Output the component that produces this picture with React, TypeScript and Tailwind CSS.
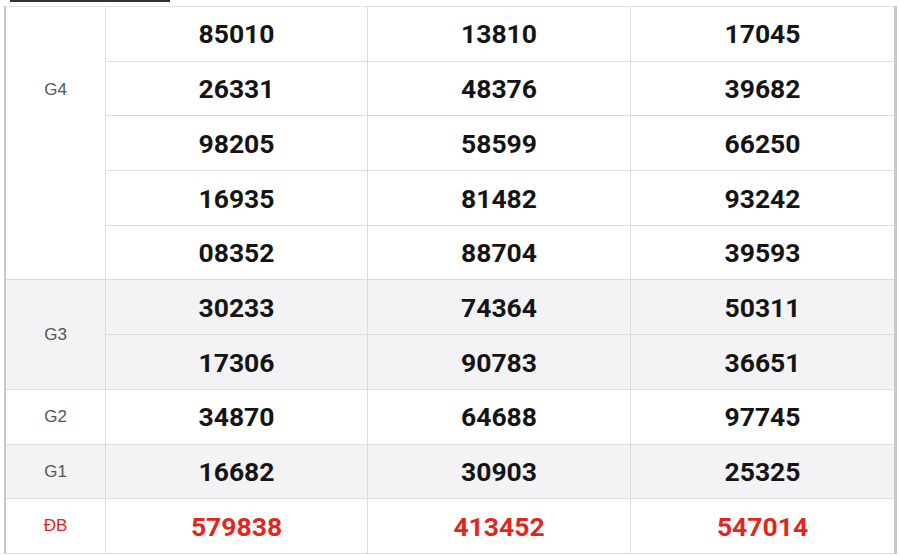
const rows: { label?: string; span?: number; nums: string[]; shaded?: boolean; special?: boolean }[] = [
  { label: 'G4', span: 5, nums: ['85010', '13810', '17045'] },
  { nums: ['26331', '48376', '39682'] },
  { nums: ['98205', '58599', '66250'] },
  { nums: ['16935', '81482', '93242'] },
  { nums: ['08352', '88704', '39593'] },
  { label: 'G3', span: 2, nums: ['30233', '74364', '50311'], shaded: true },
  { nums: ['17306', '90783', '36651'], shaded: true },
  { label: 'G2', span: 1, nums: ['34870', '64688', '97745'] },
  { label: 'G1', span: 1, nums: ['16682', '30903', '25325'], shaded: true },
  { label: 'ĐB', span: 1, nums: ['579838', '413452', '547014'], special: true },
]

const spanClass: Record<number, string> = {
  1: 'row-span-1 items-center',
  2: 'row-span-2 items-center',
  // G4 label sits level with the second row, not the middle of the block
  5: 'row-span-5 items-start pt-[70px]',
}

export default function App() {
  return (
    <div className="w-[900px] h-[556px] bg-white overflow-hidden">
      <div className="ml-[10px] w-[160px] h-[2px] bg-[#333]" />
      <div className="mt-[4px] ml-[4px] w-[893px] flex">
        <div className="w-[2px] bg-[#c9c9cb]" />
        <div
          className="grid grid-cols-[99px_262px_263px_264px] grid-rows-[repeat(10,54.7px)] border-t border-[#e2e2e4]"
          style={{ fontFamily: 'Roboto, "Liberation Sans", sans-serif' }}
        >
          {rows.map((r, i) => (
            <>
              {r.label && (
                <div
                  key={`l${i}`}
                  className={`${spanClass[r.span ?? 1]} flex justify-center border-b border-[#dcdcde] text-[17px] ${
                    r.shaded ? 'bg-[#f3f2f4]' : 'bg-white'
                  } ${r.special ? 'text-[#e3261c]' : 'text-[#555]'}`}
                  style={{ fontFamily: '"Liberation Sans", Arial, sans-serif' }}
                >
                  {r.label}
                </div>
              )}
              {r.nums.map((n, j) => (
                <div
                  key={`n${i}-${j}`}
                  className={`flex items-center justify-center pt-[1px] border-l border-b border-[#dcdcde] text-[26.5px] font-bold ${
                    r.shaded ? 'bg-[#f3f2f4]' : 'bg-white'
                  } ${r.special ? 'text-[#e3261c]' : 'text-[#141414]'}`}
                >
                  {n}
                </div>
              ))}
            </>
          ))}
        </div>
        <div className="w-[3px] bg-[#c9c9cb]" />
      </div>
    </div>
  )
}
